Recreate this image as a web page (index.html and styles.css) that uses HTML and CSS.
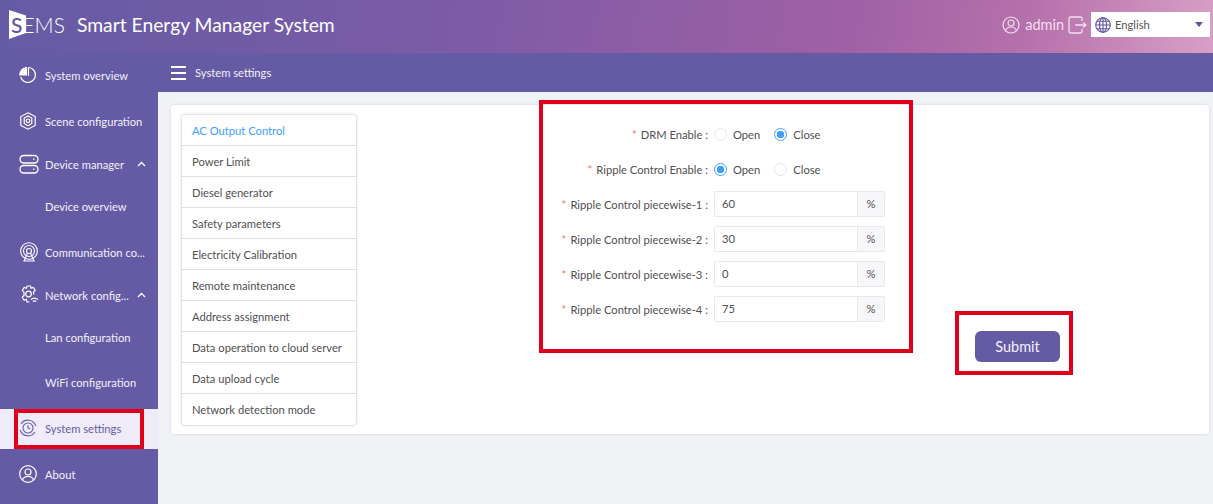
FILE: index.html
```html
<!DOCTYPE html>
<html lang="en">

<head>
    <meta charset="UTF-8">
    <meta name="viewport" content="width=device-width, initial-scale=1.0">
    <title>Smart Energy Manager System</title>
    <link rel="stylesheet" href="styles.css">
</head>

<body>
    <header class="top">
        <div class="logo">
            <svg class="logo-flag" width="17" height="29" viewBox="0 0 17 29"><polygon points="0,0 17,5.500 17,23 0,29" fill="#fff"/></svg>
            <span class="logo-s">S</span><span class="logo-rest">EMS</span>
        </div>
        <div class="title">Smart Energy Manager System</div>
        <div class="top-right">
            <svg class="icon" width="18" height="18" viewBox="0 0 18 18" fill="none" stroke="#f3dff0" stroke-width="1.200"><circle cx="9" cy="9" r="8"/><circle cx="9" cy="7" r="3"/><path d="M3.500 14.500c1-2.500 3-3.500 5.500-3.500s4.500 1 5.500 3.500"/></svg>
            <span class="admin">admin</span>
            <svg class="icon" width="19" height="18" viewBox="0 0 19 18" fill="none" stroke="#f3dff0" stroke-width="1.300"><path d="M14 5V2.500A1.500 1.500 0 0 0 12.500 1H2.500A1.500 1.500 0 0 0 1 2.500v13A1.500 1.500 0 0 0 2.500 17h10a1.500 1.500 0 0 0 1.500-1.500V13"/><path d="M7 9h11M15 6.500 18 9l-3 2.500"/></svg>
            <div class="lang">
                <svg class="icon" width="16" height="16" viewBox="0 0 16 16" fill="none" stroke="#5f55a0" stroke-width="1.100"><circle cx="8" cy="8" r="7.300"/><ellipse cx="8" cy="8" rx="3.500" ry="7.300"/><path d="M8 .7v14.600M.7 8h14.600M1.800 4.300h12.400M1.800 11.700h12.400"/></svg>
                <span class="lang-text">English</span>
                <span class="caret"></span>
            </div>
        </div>
    </header>

    <div class="main">
        <nav class="side">
            <div class="item">
                <svg class="icon" width="18" height="18" viewBox="0 0 18 18" fill="none" stroke="#fff" stroke-width="1.200"><path d="M9.500 1.500a7.500 7.500 0 1 1-7.800 9.500"/><path d="M7.500 1.500v7.500H.8A7.500 7.500 0 0 1 7.500 1.500z" fill="#fff"/><path d="M9.500 1.500v8.500"/></svg>
                <span>System overview</span>
            </div>
            <div class="item">
                <svg class="icon" width="18" height="18" viewBox="0 0 18 18" fill="none" stroke="#fff" stroke-width="1.200"><path d="M9 .8 16.200 4.500v9L9 17.200 1.800 13.500v-9z"/><path d="M9 4 12.800 6v5.500L9 13.800 5.200 11.500V6z"/><circle cx="9" cy="8.800" r="1.800"/></svg>
                <span>Scene configuration</span>
            </div>
            <div class="item parent">
                <svg class="icon" width="20" height="20" viewBox="0 0 20 20" fill="none" stroke="#fff" stroke-width="1.300"><rect x="1" y="1.500" width="18" height="7.500" rx="3.700"/><rect x="1" y="11.500" width="18" height="7.500" rx="3.700"/><path d="M14 5.200h1.500M14 15.200h1.500"/></svg>
                <span>Device manager</span>
                <svg class="arrow" width="9" height="6" viewBox="0 0 9 6" fill="none" stroke="#fff" stroke-width="1.300"><path d="M1 5 4.500 1.500 8 5"/></svg>
            </div>
            <div class="item sub"><span>Device overview</span></div>
            <div class="item">
                <svg class="icon" width="20" height="20" viewBox="0 0 20 20" fill="none" stroke="#fff" stroke-width="1.100"><circle cx="10" cy="9" r="8.300"/><circle cx="10" cy="9" r="5.500"/><circle cx="10" cy="9" r="2.500"/><path d="M8.500 11 5 19h10l-3.500-8"/></svg>
                <span>Communication co...</span>
            </div>
            <div class="item parent">
                <svg class="icon" width="20" height="20" viewBox="0 0 20 20" fill="none" stroke="#fff" stroke-width="1.200"><path d="M8 1h3.500l.6 2.300 2.300-.8 1.800 3-1.700 1.700.2 2.300M8 1l-.6 2.300-2.300-.8-1.800 3L5 7.200v3.300l-1.700 1.700 1.800 3 2.300-.8.600 2.600h2.500"/><circle cx="9.500" cy="9" r="2.800"/><path d="M12 14.500c2-1.600 5-1.600 7 0M13.800 16.500c1-.8 2.400-.8 3.400 0"/></svg>
                <span>Network config...</span>
                <svg class="arrow" width="9" height="6" viewBox="0 0 9 6" fill="none" stroke="#fff" stroke-width="1.300"><path d="M1 5 4.500 1.500 8 5"/></svg>
            </div>
            <div class="item sub"><span>Lan configuration</span></div>
            <div class="item sub"><span>WiFi configuration</span></div>
            <div class="item active">
                <svg class="icon" width="18" height="18" viewBox="0 0 18 18" fill="none" stroke="#655ba5" stroke-width="1.100"><path d="M2 5A8.200 8.200 0 0 1 16.800 7M16 13A8.200 8.200 0 0 1 1.200 11"/><circle cx="9" cy="9" r="5"/><path d="M9 6.200V9l2.200 1"/></svg>
                <span>System settings</span>
            </div>
            <div class="item">
                <svg class="icon" width="18" height="18" viewBox="0 0 18 18" fill="none" stroke="#fff" stroke-width="1.200"><circle cx="9" cy="9" r="8.300"/><circle cx="9" cy="7" r="3"/><path d="M3.500 14.800c1-2.500 3-3.500 5.500-3.500s4.500 1 5.500 3.500"/></svg>
                <span>About</span>
            </div>
        </nav>

        <div class="content">
            <div class="crumb">
                <div class="burger"><i></i><i></i><i></i></div>
                <span>System settings</span>
            </div>
            <div class="page">
                <div class="card">
                    <ul class="tabs">
                        <li class="current">AC Output Control</li>
                        <li>Power Limit</li>
                        <li>Diesel generator</li>
                        <li>Safety parameters</li>
                        <li>Electricity Calibration</li>
                        <li>Remote maintenance</li>
                        <li>Address assignment</li>
                        <li>Data operation to cloud server</li>
                        <li>Data upload cycle</li>
                        <li>Network detection mode</li>
                    </ul>
                    <form class="form">
                        <div class="row">
                            <label class="lbl"><b>*</b>DRM Enable :</label>
                            <div class="radios">
                                <span class="radio"><i></i>Open</span>
                                <span class="radio on"><i></i>Close</span>
                            </div>
                        </div>
                        <div class="row">
                            <label class="lbl"><b>*</b>Ripple Control Enable :</label>
                            <div class="radios">
                                <span class="radio on"><i></i>Open</span>
                                <span class="radio"><i></i>Close</span>
                            </div>
                        </div>
                        <div class="row">
                            <label class="lbl"><b>*</b>Ripple Control piecewise-1 :</label>
                            <div class="field"><span class="val">60</span><span class="unit">%</span></div>
                        </div>
                        <div class="row">
                            <label class="lbl"><b>*</b>Ripple Control piecewise-2 :</label>
                            <div class="field"><span class="val">30</span><span class="unit">%</span></div>
                        </div>
                        <div class="row">
                            <label class="lbl"><b>*</b>Ripple Control piecewise-3 :</label>
                            <div class="field"><span class="val">0</span><span class="unit">%</span></div>
                        </div>
                        <div class="row">
                            <label class="lbl"><b>*</b>Ripple Control piecewise-4 :</label>
                            <div class="field"><span class="val">75</span><span class="unit">%</span></div>
                        </div>
                    </form>
                    <button class="submit" type="button">Submit</button>
                </div>
            </div>
        </div>
    </div>

    <!-- red callouts drawn over the screenshot -->
    <div class="mark mark-side"></div>
    <div class="mark mark-form"></div>
    <div class="mark mark-submit"></div>
</body>

</html>
```
FILE: styles.css
```css
* {
    box-sizing: border-box;
}

body {
    margin: 0;
    height: 504px;
    overflow: hidden;
    font-family: 'Lato', 'Noto Sans', sans-serif;
    font-size: 11.2px;
    color: #505050;
    background: #f0f2f6;
    position: relative;
}

.icon {
    flex: none;
    display: block;
}

.top {
    height: 53px;
    display: flex;
    align-items: center;
    padding-bottom: 4px;
    background: linear-gradient(100deg, #655ba5 0%, #7a5ba6 35%, #a060a5 70%, #b672ac 85%, #d99fc6 100%);
    color: #fff;
}

.logo {
    position: relative;
    width: 77px;
    height: 49px;
    flex: none;
    font-size: 21px;
    line-height: 49px;
    padding-left: 11px;
}

.logo-flag {
    position: absolute;
    left: 9px;
    top: 10px;
}

.logo-s {
    position: relative;
    color: #5f55a0;
    font-weight: 500;
}

.logo-rest {
    position: relative;
    font-weight: 300;
}

.title {
    font-size: 19.300px;
}

.top-right {
    margin-left: auto;
    margin-right: 3px;
    display: flex;
    align-items: center;
}

.admin {
    margin: 0 4px 0 5px;
    font-size: 14.500px;
    color: #f3dff0;
}

.lang {
    width: 119px;
    height: 25px;
    margin-left: 4px;
    background: #fff;
    display: flex;
    align-items: center;
    padding: 0 7px 0 4px;
    color: #555;
}

.lang-text {
    margin-left: 4px;
}

.caret {
    margin-left: auto;
    border-left: 4px solid transparent;
    border-right: 4px solid transparent;
    border-top: 5px solid #5f55a0;
}

.main {
    display: flex;
    height: 451px;
}

.side {
    width: 158px;
    flex: none;
    background: #655ba5;
    color: #f2f0f8;
}

.item {
    height: 46px;
    display: flex;
    align-items: center;
    padding: 0 0 2px 19px;
    white-space: nowrap;
}

.item span {
    position: absolute;
    left: 45px;
}

.item.parent {
    height: 40px;
}

.item.sub {
    height: 45px;
}

.item.active {
    height: 40px;
    margin: 3px 0;
    background: #efebf8;
    color: #655ba5;
}

.arrow {
    position: absolute;
    left: 137px;
}

.content {
    flex: 1;
    display: flex;
    flex-direction: column;
}

.crumb {
    height: 39px;
    background: #655ba5;
    color: #f2f0f8;
    display: flex;
    align-items: center;
    padding-left: 13px;
}

.burger {
    width: 15px;
    margin-right: 9px;
    display: flex;
    flex-direction: column;
    gap: 4px;
}

.burger i {
    height: 2px;
    background: #fff;
}

.page {
    flex: 1;
    padding: 13px 4px 0 13px;
}

.card {
    height: 329px;
    background: #fff;
    border-radius: 3px;
    box-shadow: 0 0 3px rgba(0, 0, 0, 0.12);
    display: flex;
    padding: 10px 11px;
}

.tabs {
    list-style: none;
    margin: 0;
    padding: 0;
    width: 174px;
    height: 310px;
    flex: none;
    border-radius: 3px;
    box-shadow: 0 0 3px rgba(0, 0, 0, 0.3);
}

.tabs li {
    height: 31px;
    line-height: 31px;
    padding-left: 10px;
    border-bottom: 1px solid #dcdfe6;
    white-space: nowrap;
}

.tabs li:last-child {
    border-bottom: 0;
}

.tabs .current {
    color: #409eff;
}

.form {
    width: 345px;
    flex: none;
    margin: 6px 0 0 184px;
    display: flex;
    flex-direction: column;
    gap: 9px;
}

.row {
    height: 26px;
    display: flex;
    align-items: center;
}

.lbl {
    width: 168px;
    flex: none;
    text-align: right;
    white-space: nowrap;
}

.lbl b {
    color: #f56c6c;
    font-weight: 400;
    margin-right: 4px;
}

.radios {
    margin-left: 6px;
    display: flex;
    gap: 14px;
}

.radio {
    display: flex;
    align-items: center;
}

.radio i {
    width: 13px;
    height: 13px;
    margin-right: 6px;
    border: 1px solid #e4e7ed;
    border-radius: 50%;
    background: #fff;
}

.radio.on i {
    border: 1px solid #409eff;
    background: radial-gradient(circle, #409eff 0 3.500px, #fff 4px);
}

.field {
    width: 172px;
    height: 26px;
    margin-left: 6px;
    display: flex;
    border: 1px solid #e8e8ee;
    border-radius: 2px;
}

.val {
    flex: 1;
    line-height: 24px;
    padding-left: 7px;
}

.unit {
    width: 27px;
    flex: none;
    line-height: 24px;
    text-align: center;
    background: #f7f7f9;
    border-left: 1px solid #e8e8ee;
}

.submit {
    width: 85px;
    height: 31px;
    flex: none;
    margin: 216px 0 0 90px;
    border: 0;
    border-radius: 6px;
    background: #655ba5;
    color: #f3f0fb;
    font-family: inherit;
    font-size: 14.500px;
}

.mark {
    position: absolute;
    border: 4px solid #e0001b;
}

.mark-side {
    left: 14px;
    top: 409px;
    width: 130px;
    height: 40px;
}

.mark-form {
    left: 539px;
    top: 100px;
    width: 374px;
    height: 253px;
}

.mark-submit {
    left: 955px;
    top: 311px;
    width: 118px;
    height: 64px;
}
```
